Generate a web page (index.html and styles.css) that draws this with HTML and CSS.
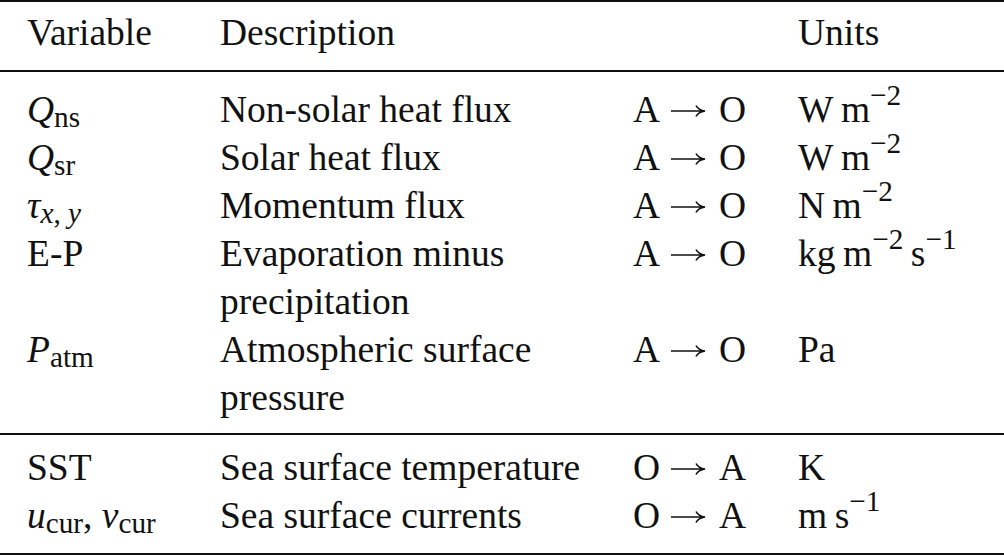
FILE: index.html
```html
<!DOCTYPE html>
<html lang="en">
<head>
<meta charset="UTF-8" />
<meta name="viewport" content="width=device-width, initial-scale=1" />
<title>Coupling variables</title>
<link rel="stylesheet" href="styles.css">
</head>
<body>

<!-- Variables exchanged between atmosphere and ocean -->
<table class="vars">
  <colgroup>
    <col class="col-var">
    <col class="col-desc">
    <col class="col-dir">
    <col class="col-unit">
  </colgroup>
  <thead>
    <tr>
      <th>Variable</th>
      <th>Description</th>
      <th></th>
      <th>Units</th>
    </tr>
  </thead>
  <tbody class="to-ocean">
    <tr>
      <td><i>Q</i><sub>ns</sub></td>
      <td>Non-solar heat flux</td>
      <td>A<svg class="arrow" viewBox="0 0 36 14" role="img" aria-label="to"><path d="M1 7H34.5M26 1.5C27.5 4.5 30.5 6.3 35 7C30.5 7.7 27.5 9.5 26 12.5" /></svg>O</td>
      <td>W&thinsp;m<sup>&minus;2</sup></td>
    </tr>
    <tr>
      <td><i>Q</i><sub>sr</sub></td>
      <td>Solar heat flux</td>
      <td>A<svg class="arrow" viewBox="0 0 36 14" role="img" aria-label="to"><path d="M1 7H34.5M26 1.5C27.5 4.5 30.5 6.3 35 7C30.5 7.7 27.5 9.5 26 12.5" /></svg>O</td>
      <td>W&thinsp;m<sup>&minus;2</sup></td>
    </tr>
    <tr>
      <td><i>&tau;</i><sub><i>x</i>, <i>y</i></sub></td>
      <td>Momentum flux</td>
      <td>A<svg class="arrow" viewBox="0 0 36 14" role="img" aria-label="to"><path d="M1 7H34.5M26 1.5C27.5 4.5 30.5 6.3 35 7C30.5 7.7 27.5 9.5 26 12.5" /></svg>O</td>
      <td>N&thinsp;m<sup>&minus;2</sup></td>
    </tr>
    <tr>
      <td>E-P</td>
      <td>Evaporation minus precipitation</td>
      <td>A<svg class="arrow" viewBox="0 0 36 14" role="img" aria-label="to"><path d="M1 7H34.5M26 1.5C27.5 4.5 30.5 6.3 35 7C30.5 7.7 27.5 9.5 26 12.5" /></svg>O</td>
      <td>kg&thinsp;m<sup>&minus;2</sup>&thinsp;s<sup>&minus;1</sup></td>
    </tr>
    <tr>
      <td><i>P</i><sub>atm</sub></td>
      <td>Atmospheric surface pressure</td>
      <td>A<svg class="arrow" viewBox="0 0 36 14" role="img" aria-label="to"><path d="M1 7H34.5M26 1.5C27.5 4.5 30.5 6.3 35 7C30.5 7.7 27.5 9.5 26 12.5" /></svg>O</td>
      <td>Pa</td>
    </tr>
  </tbody>
  <tbody class="to-atm">
    <tr>
      <td>SST</td>
      <td>Sea surface temperature</td>
      <td>O<svg class="arrow" viewBox="0 0 36 14" role="img" aria-label="to"><path d="M1 7H34.5M26 1.5C27.5 4.5 30.5 6.3 35 7C30.5 7.7 27.5 9.5 26 12.5" /></svg>A</td>
      <td>K</td>
    </tr>
    <tr>
      <td><i>u</i><sub>cur</sub>, <i>v</i><sub>cur</sub></td>
      <td>Sea surface currents</td>
      <td>O<svg class="arrow" viewBox="0 0 36 14" role="img" aria-label="to"><path d="M1 7H34.5M26 1.5C27.5 4.5 30.5 6.3 35 7C30.5 7.7 27.5 9.5 26 12.5" /></svg>A</td>
      <td>m&thinsp;s<sup>&minus;1</sup></td>
    </tr>
  </tbody>
</table>

</body>
</html>
```

FILE: styles.css
```css
body {
  font-family: "Liberation Serif", "Times New Roman", serif;
  background: #fff;
  color: #111;
  margin: 0;
}

/* Table in booktabs style */
.vars {
  width: 1004px;
  table-layout: fixed;
  border-collapse: separate;
  border-spacing: 0;
  font-size: 37.5px;
  line-height: 48px;
}
.col-var { width: 220px; }
.col-desc { width: 413px; }
.col-dir { width: 165px; }
.col-unit { width: 206px; }

.vars th,
.vars td {
  padding: 0;
  text-align: left;
  vertical-align: top;
  font-weight: normal;
}
.vars th:first-child,
.vars td:first-child {
  padding-left: 27px;
}
.vars td:nth-child(2) {
  padding-right: 40px;
}

/* rules */
.vars th {
  border-top: 2px solid #111;
  border-bottom: 2px solid #111;
  padding-top: 7px;
  padding-bottom: 13px;
}
.to-ocean tr:first-child td { padding-top: 14px; }
.to-ocean tr:last-child td {
  padding-bottom: 11px;
  border-bottom: 2px solid #111;
}
.to-atm tr:first-child td { padding-top: 9px; }
.to-atm tr:last-child td {
  padding-bottom: 13px;
  border-bottom: 2px solid #111;
}

/* math bits */
.vars i {
  font-style: italic;
}
.vars sub,
.vars sup {
  font-size: 0.78em;
  line-height: 0;
}
.vars sub {
  vertical-align: -5px;
}
.vars sup {
  vertical-align: 17px;
}
.arrow {
  width: 36px;
  height: 14px;
  margin: 0 13px 0 10px;
  vertical-align: 4px;
  fill: none;
  stroke: #111;
  stroke-width: 1.6;
}
```
